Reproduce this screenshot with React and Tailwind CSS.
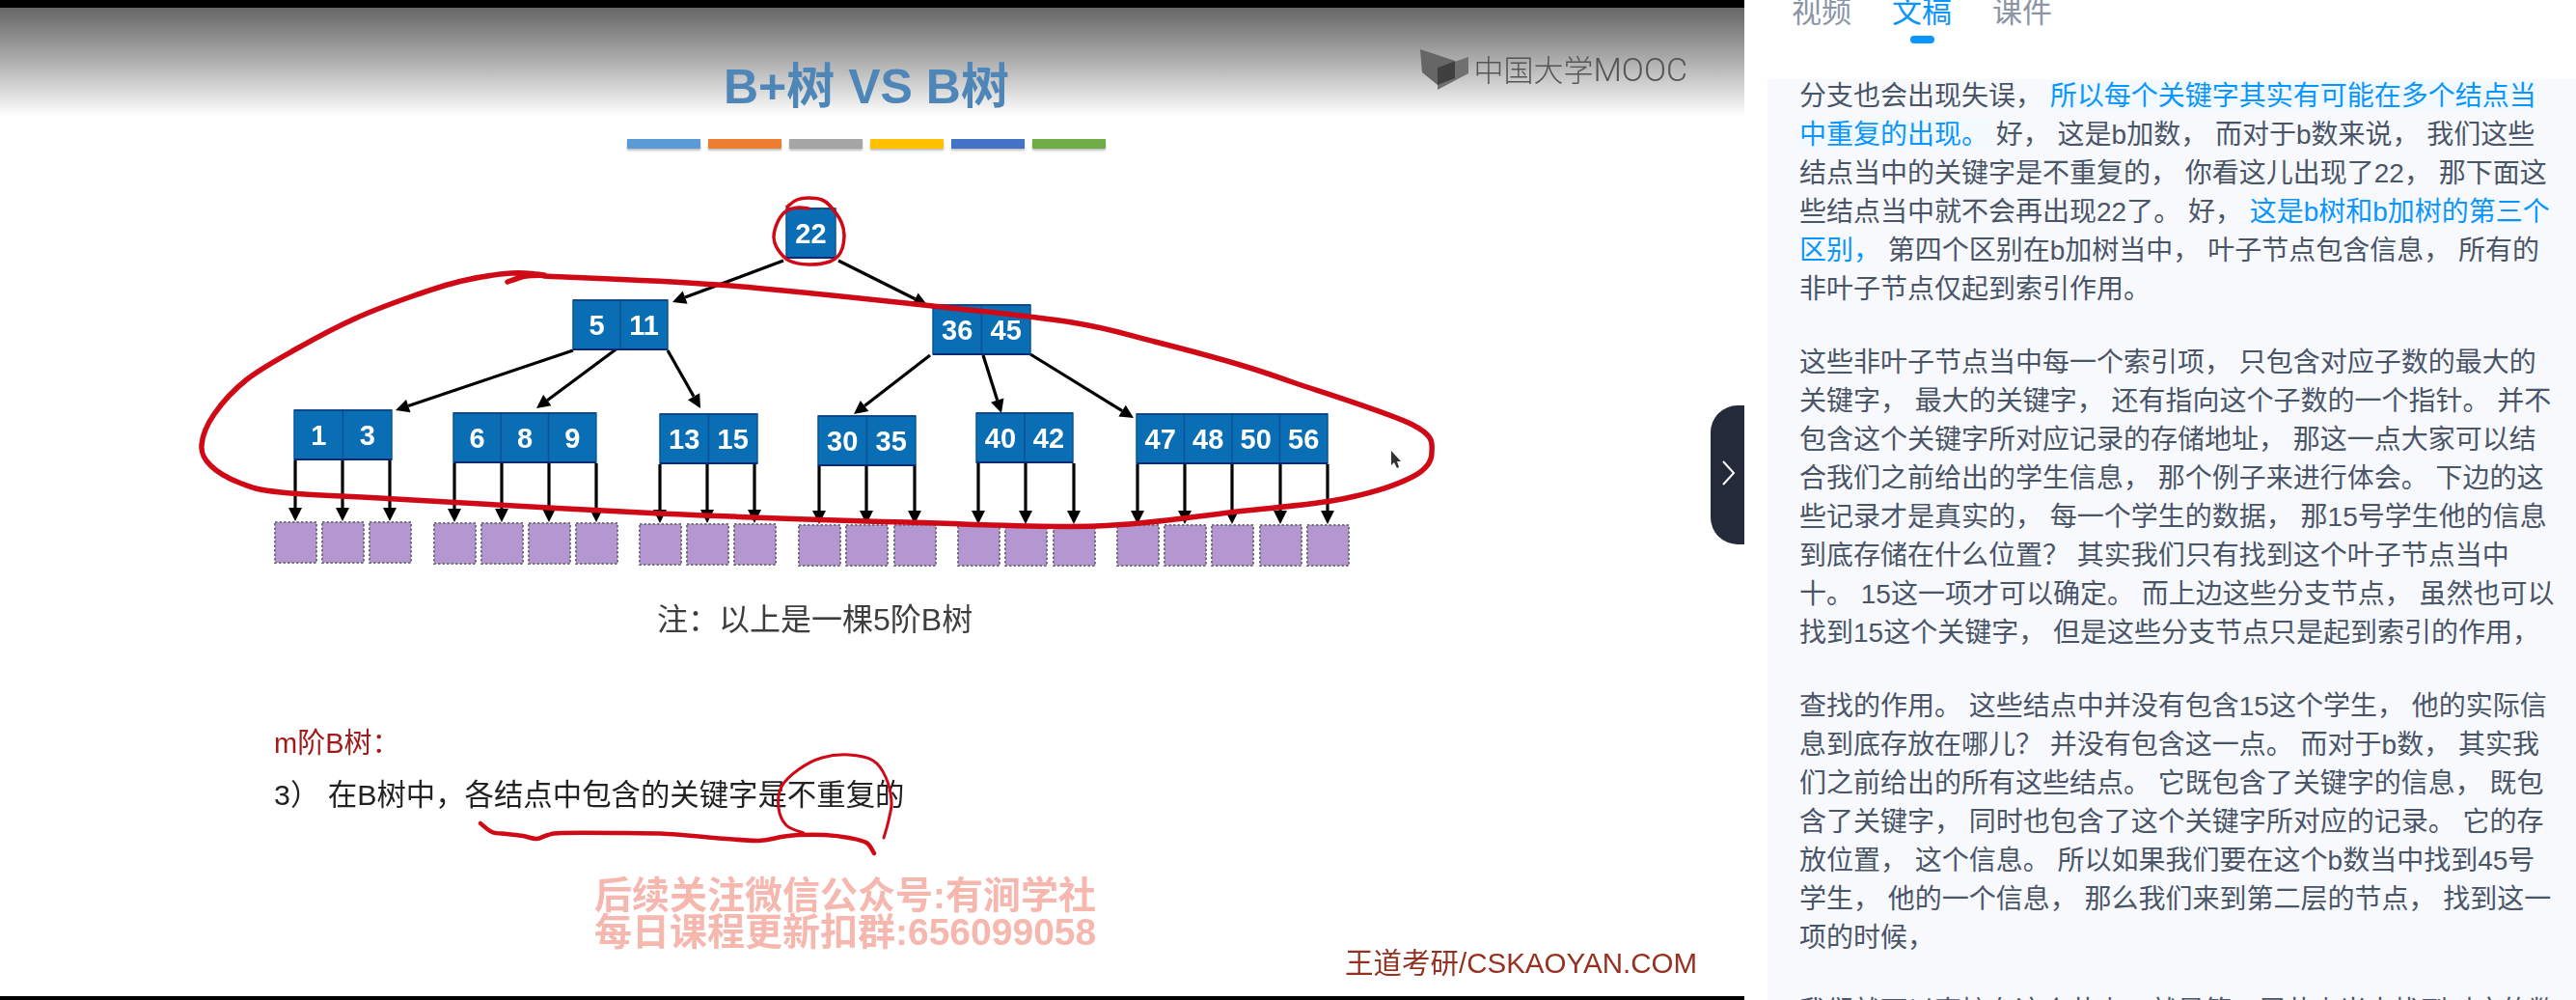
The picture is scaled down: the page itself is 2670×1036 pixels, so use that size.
const bars = ["bg-[#5b9bd5]", "bg-[#ed7d31]", "bg-[#a5a5a5]", "bg-[#ffc000]", "bg-[#4472c4]", "bg-[#70ad47]"];

const nodes = [
  { x: 815, y: 216, w: 51, keys: ["22"] },
  { x: 594, y: 311, w: 49, keys: ["5", "11"] },
  { x: 967, y: 316, w: 50.5, keys: ["36", "45"] },
  { x: 305, y: 425, w: 50.5, keys: ["1", "3"] },
  { x: 470, y: 428, w: 49.3, keys: ["6", "8", "9"] },
  { x: 684, y: 429, w: 50.5, keys: ["13", "15"] },
  { x: 848, y: 431, w: 50.5, keys: ["30", "35"] },
  { x: 1012, y: 428, w: 50, keys: ["40", "42"] },
  { x: 1178, y: 429, w: 49.5, keys: ["47", "48", "50", "56"] },
];

const arrows = [
  [812, 270, 697, 313],
  [869, 270, 961, 316],
  [594, 363, 410, 425],
  [641, 360, 556, 423],
  [692, 363, 726, 423],
  [964, 368, 885, 429],
  [1019, 368, 1038, 428],
  [1068, 367, 1175, 433],
];

// leaf x centres, grouped by the node above them
const leafGroups = [
  { from: 477, top: 540, xs: [306, 355, 404] },
  { from: 480, top: 541, xs: [471, 520, 569, 618] },
  { from: 481, top: 542, xs: [684, 733, 782] },
  { from: 482, top: 543, xs: [849, 898, 948] },
  { from: 480, top: 543, xs: [1014, 1063, 1113] },
  { from: 481, top: 543, xs: [1179, 1228, 1277, 1327, 1376] },
];

// turns a list of points into a smooth curve
const smooth = (pts) => {
  let d = `M${pts[0][0]} ${pts[0][1]}`;
  for (let i = 0; i < pts.length - 1; i++) {
    const p0 = pts[i - 1] || pts[i];
    const p1 = pts[i];
    const p2 = pts[i + 1];
    const p3 = pts[i + 2] || p2;
    const c1x = p1[0] + (p2[0] - p0[0]) / 6;
    const c1y = p1[1] + (p2[1] - p0[1]) / 6;
    const c2x = p2[0] - (p3[0] - p1[0]) / 6;
    const c2y = p2[1] - (p3[1] - p1[1]) / 6;
    d += ` C${c1x} ${c1y} ${c2x} ${c2y} ${p2[0]} ${p2[1]}`;
  }
  return d;
};

const bigLoop = smooth([
  [526, 292], [545, 286], [564, 285], [530, 283], [479, 291], [427, 307], [368, 330], [308, 361], [256, 393],
  [222, 429], [209, 461], [218, 482], [248, 500], [291, 510], [410, 517], [684, 532], [940, 541], [1136, 545],
  [1282, 530], [1391, 517], [1464, 494], [1484, 469], [1464, 440], [1340, 396], [1282, 377], [1197, 354],
  [1111, 334], [957, 316], [744, 295], [564, 286],
]);

const rootLoop = smooth([
  [816, 214], [826, 207], [838, 205], [852, 207], [861, 214], [872, 230], [875, 245], [871, 262], [860, 271],
  [838, 274], [818, 270], [806, 258], [802, 245], [807, 228], [816, 218], [828, 215], [838, 216],
]);

const underline = smooth([
  [498, 853], [510, 862], [525, 864], [542, 866], [556, 869], [568, 865], [582, 863], [640, 863], [692, 864],
  [740, 868], [786, 871], [810, 867], [828, 865], [855, 865], [880, 868], [898, 873], [906, 884],
]);

const noteCircle = smooth([
  [833, 863], [815, 855], [807, 837], [810, 815], [828, 797], [852, 785], [880, 782], [905, 788], [918, 805],
  [924, 830], [921, 850], [916, 868],
]);

const Arrow = ({ line }) => {
  const [x1, y1, x2, y2] = line;
  const len = Math.hypot(x2 - x1, y2 - y1);
  const ux = (x2 - x1) / len;
  const uy = (y2 - y1) / len;
  const bx = x2 - ux * 14;
  const by = y2 - uy * 14;
  const head = `${x2},${y2} ${bx - uy * 7},${by + ux * 7} ${bx + uy * 7},${by - ux * 7}`;
  return (
    <g>
      <line x1={x1} y1={y1} x2={bx} y2={by} stroke="#000" strokeWidth="3.2" />
      <polygon points={head} fill="#000" />
    </g>
  );
};

const TreeNode = ({ node }) => (
  <g>
    {node.keys.map((key, i) => (
      <g key={key}>
        <rect x={node.x + i * node.w} y={node.y} width={node.w} height="51" fill="#0a6eb4" stroke="#0a5598" strokeWidth="1.5" />
        <text x={node.x + i * node.w + node.w / 2} y={node.y + 36} textAnchor="middle" fill="#fff" fontSize="29" fontWeight="700" fontFamily="Liberation Sans, sans-serif">
          {key}
        </text>
      </g>
    ))}
    <line x1={node.x} y1={node.y} x2={node.x + node.keys.length * node.w} y2={node.y} stroke="#0a3f80" strokeWidth="1.5" />
    <line x1={node.x} y1={node.y + 51} x2={node.x + node.keys.length * node.w} y2={node.y + 51} stroke="#0a2a78" strokeWidth="2" />
  </g>
);

const Tree = () => (
  <svg viewBox="0 190 1808 410" className="block h-[410px] w-[1808px]">
    {arrows.map((a, i) => (
      <Arrow key={i} line={a} />
    ))}
    {leafGroups.map((g) =>
      g.xs.map((x) => (
        <g key={x}>
          <Arrow line={[x, g.from, x, g.top]} />
          <rect x={x - 21} y={g.top + 1} width="43" height="42" fill="#b497d0" stroke="#77717f" strokeWidth="2" strokeDasharray="2.5 2" />
        </g>
      ))
    )}
    {nodes.map((n) => (
      <TreeNode key={n.x} node={n} />
    ))}
    <path d={bigLoop} fill="none" stroke="#cf0a16" strokeWidth="5.5" strokeLinecap="round" strokeLinejoin="round" />
    <path d={rootLoop} fill="none" stroke="#cf0a16" strokeWidth="3.5" strokeLinecap="round" />
  </svg>
);

const Logo = () => (
  <div className="flex items-start text-[#555]">
    <svg width="50" height="44" viewBox="0 0 50 44" className="shrink-0">
      <polygon points="0,1 36,13 18,20 18,38 2,25" fill="#666" />
      <polygon points="18,20 50,9 50,26 18,43" fill="#707070" />
      <polygon points="18,20 36,13 36,31 18,38" fill="#404040" />
    </svg>
    <span className="ml-[5px] mt-[2px] whitespace-nowrap text-[31px] font-light leading-[40px]">
      中国大学<span className="font-['Roboto',sans-serif] text-[34px]">MOOC</span>
    </span>
  </div>
);

const Annotations = () => (
  <svg viewBox="0 0 1808 1036" className="pointer-events-none absolute left-0 top-0 h-[1036px] w-[1808px] blur-[0.5px]">
    <path d={underline} fill="none" stroke="#cf0a16" strokeWidth="4.5" strokeLinecap="round" />
    <path d={noteCircle} fill="none" stroke="#cf0a16" strokeWidth="3" strokeLinecap="round" />
    <path d="M1442 467 L1442 482 L1445 479 L1448 485 L1450 484 L1448 478 L1452 478 Z" fill="#333" />
  </svg>
);

const Slide = () => (
  <div className="relative flex-1 bg-white blur-[0.5px]">
    <div className="flex h-[112px] items-start justify-between bg-linear-to-b from-[#666666] to-white pl-[750px] pr-[59px]">
      <h1 className="mt-[52px] text-[50px] font-bold leading-[60px] text-[#4f86b8]">B+树 VS B树</h1>
      <div className="mt-[42px]">
        <Logo />
      </div>
    </div>
    <div className="ml-[650px] mt-[24px] flex gap-[8px]">
      {bars.map((c) => (
        <div key={c} className={`h-[10px] w-[76px] shadow-[0_2px_2px_rgba(0,0,0,0.25)] ${c}`} />
      ))}
    </div>
    <div className="mt-[36px]">
      <Tree />
    </div>
    <p className="ml-[681px] mt-[18px] text-[32px] leading-[48px] text-[#3d3d3d]">注：以上是一棵5阶B树</p>
    <p className="ml-[284px] mt-[84px] text-[29px] leading-[40px] text-[#a01c1c]">m阶B树：</p>
    <p className="ml-[284px] mt-[11px] text-[30.4px] leading-[44px] text-[#222]">3） 在B树中，各结点中包含的关键字是不重复的</p>
    <div className="ml-[616px] mt-[64px] w-[530px] text-[39px] font-bold leading-[38px] text-[#f5b7ae]">
      <p>后续关注微信公众号:有涧学社</p>
      <p>每日课程更新扣群:656099058</p>
    </div>
    <p className="ml-[1394px] mt-[-5px] text-[29.5px] leading-[36px] text-[#963020]">王道考研/CSKAOYAN.COM</p>
  </div>
);

const Transcript = () => (
  <div className="-mt-[2px] pl-[33px] pr-[20px] text-[28px] leading-[40px] text-[#4a5568]">
    <p>
      分支也会出现失误， <span className="bg-[#f2f9ff] text-[#0a96ff]">所以每个关键字其实有可能在多个结点当中重复的出现。</span> 好， 这是b加数， 而对于b数来说， 我们这些结点当中的关键字是不重复的， 你看这儿出现了22， 那下面这些结点当中就不会再出现22了。 好， <span className="text-[#0a96ff]">这是b树和b加树的第三个区别，</span> 第四个区别在b加树当中， 叶子节点包含信息， 所有的非叶子节点仅起到索引作用。
    </p>
    <p className="mt-[36px]">
      这些非叶子节点当中每一个索引项， 只包含对应子数的最大的关键字， 最大的关键字， 还有指向这个子数的一个指针。 并不包含这个关键字所对应记录的存储地址， 那这一点大家可以结合我们之前给出的学生信息， 那个例子来进行体会。 下边的这些记录才是真实的， 每一个学生的数据， 那15号学生他的信息到底存储在什么位置？ 其实我们只有找到这个叶子节点当中<br />十。 15这一项才可以确定。 而上边这些分支节点， 虽然也可以找到15这个关键字， 但是这些分支节点只是起到索引的作用，
    </p>
    <p className="mt-[36px]">
      查找的作用。 这些结点中并没有包含15这个学生， 他的实际信息到底存放在哪儿？ 并没有包含这一点。 而对于b数， 其实我们之前给出的所有这些结点。 它既包含了关键字的信息， 既包含了关键字， 同时也包含了这个关键字所对应的记录。 它的存放位置， 这个信息。 所以如果我们要在这个b数当中找到45号学生， 他的一个信息， 那么我们来到第二层的节点， 找到这一项的时候，
    </p>
    <p className="mt-[36px]">
      我们就可以直接在这个节点，就是第二层节点当中找到对应的数据存放的位置信息
    </p>
  </div>
);

export default function App() {
  return (
    <div className="flex h-[1036px] w-[2670px] overflow-hidden bg-white font-['Liberation_Sans','Noto_Sans_CJK_SC',sans-serif]">
      <div className="relative flex w-[1808px] shrink-0 flex-col border-y-[8px] border-b-[4px] border-black">
        <Slide />
      </div>
      <div className="flex min-w-0 flex-1 flex-col">
        <div className="flex h-[82px] shrink-0 gap-[42px] pl-[49px] text-[31px] text-[#8b95a5]">
          <div className="-mt-[9px] leading-[44px]">视频</div>
          <div className="relative -mt-[9px] leading-[44px] text-[#0a96ff]">
            文稿
            <div className="absolute left-[19px] top-[46px] h-[8px] w-[25px] rounded-full bg-[#0a96ff]" />
          </div>
          <div className="-mt-[9px] leading-[44px]">课件</div>
        </div>
        <div className="ml-[24px] flex-1 overflow-hidden bg-[#f7f9fd]">
          <Transcript />
        </div>
      </div>
      <div className="absolute left-[1773px] top-[420px] flex h-[144px] w-[35px] items-center justify-center rounded-l-[28px] bg-[#252a3a]">
        <svg width="16" height="26" viewBox="0 0 16 26" className="mt-[-4px] ml-[2px]">
          <path d="M2 1 L13 13 L2 25" fill="none" stroke="#fff" strokeWidth="2" />
        </svg>
      </div>
      <Annotations />
    </div>
  );
}
